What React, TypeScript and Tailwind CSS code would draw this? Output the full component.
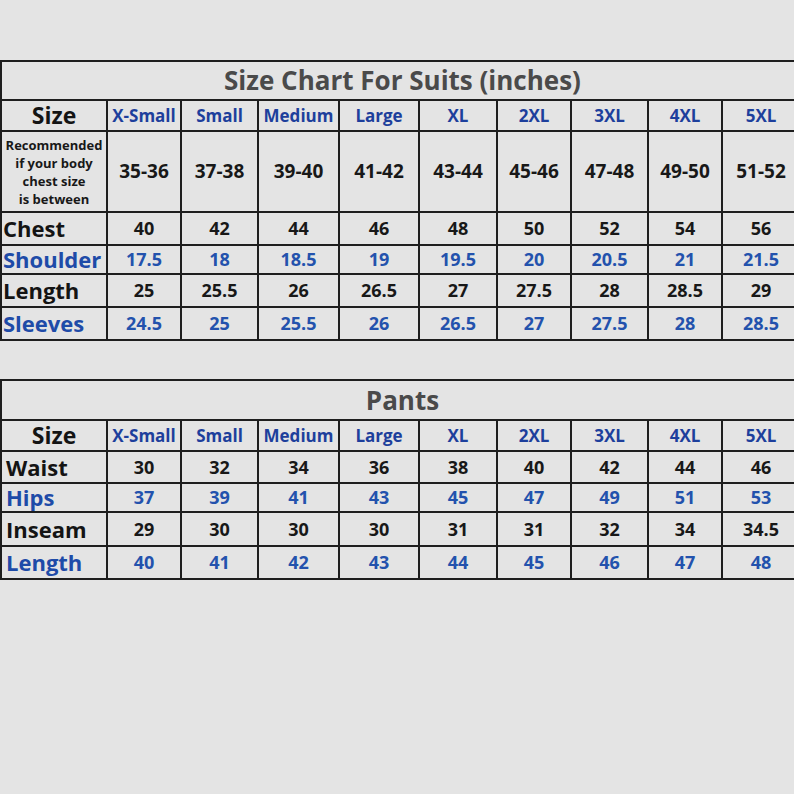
const cols = "grid-cols-[104px_72px_75px_79px_78px_76px_72px_75px_72px_76px]";
const sizes = ["X-Small", "Small", "Medium", "Large", "XL", "2XL", "3XL", "4XL", "5XL"];

type Row = { label: string; values: string[]; blue?: boolean; h: string };

const suitRows: Row[] = [
  { label: "Chest", values: ["40", "42", "44", "46", "48", "50", "52", "54", "56"], h: "h-[31px]" },
  { label: "Shoulder", values: ["17.5", "18", "18.5", "19", "19.5", "20", "20.5", "21", "21.5"], blue: true, h: "h-[27px]" },
  { label: "Length", values: ["25", "25.5", "26", "26.5", "27", "27.5", "28", "28.5", "29"], h: "h-[31px]" },
  { label: "Sleeves", values: ["24.5", "25", "25.5", "26", "26.5", "27", "27.5", "28", "28.5"], blue: true, h: "h-[31px]" },
];

const pantRows: Row[] = [
  { label: "Waist", values: ["30", "32", "34", "36", "38", "40", "42", "44", "46"], h: "h-[30px]" },
  { label: "Hips", values: ["37", "39", "41", "43", "45", "47", "49", "51", "53"], blue: true, h: "h-[27px]" },
  { label: "Inseam", values: ["29", "30", "30", "30", "31", "31", "32", "34", "34.5"], h: "h-[32px]" },
  { label: "Length", values: ["40", "41", "42", "43", "44", "45", "46", "47", "48"], blue: true, h: "h-[31px]" },
];

const ranges = ["35-36", "37-38", "39-40", "41-42", "43-44", "45-46", "47-48", "49-50", "51-52"];

function Cell({ children, className = "" }: { children?: React.ReactNode; className?: string }) {
  return <div className={`flex items-center justify-center bg-[#e4e4e4] ${className}`}>{children}</div>;
}

function HeaderRow() {
  return (
    <>
      <Cell className="h-[29px] text-[23px] text-[#141414]">Size</Cell>
      {sizes.map((s) => (
        <Cell key={s} className="text-[17px] text-[#1d3f9c]">
          {s}
        </Cell>
      ))}
    </>
  );
}

function DataRows({ rows, pad }: { rows: Row[]; pad: string }) {
  return (
    <>
      {rows.map((r, i) => (
        <div key={i} className="contents">
          <Cell className={`${r.h} justify-start ${pad} text-[22px] ${r.blue ? "text-[#1e4ba8]" : "text-[#141414]"}`}>
            {r.label}
          </Cell>
          {r.values.map((v, j) => (
            <Cell key={j} className={`text-[18px] ${r.blue ? "text-[#2352ad]" : "text-[#181818]"}`}>
              {v}
            </Cell>
          ))}
        </div>
      ))}
    </>
  );
}

export default function App() {
  return (
    <div
      className="h-[794px] w-[794px] overflow-hidden bg-[#e4e4e4] pt-[60px] font-bold"
      style={{ fontFamily: '"Open Sans", "Liberation Sans", sans-serif' }}
    >
      <div className={`grid w-[800px] ${cols} gap-[2px] bg-[#1e1e1e] p-[2px]`}>
        <Cell className="col-span-10 h-[37px] pl-[4px] text-[26px] text-[#4a4a4a]">Size Chart For Suits (inches)</Cell>
        <HeaderRow />
        <Cell className="h-[79px] flex-col text-[13px] leading-[18px] text-[#181818]">
          <span>Recommended</span>
          <span>if your body</span>
          <span>chest size</span>
          <span>is between</span>
        </Cell>
        {ranges.map((r) => (
          <Cell key={r} className="text-[19px] text-[#181818]">
            {r}
          </Cell>
        ))}
        <DataRows rows={suitRows} pad="pl-[1px]" />
      </div>

      <div className={`mt-[38px] grid w-[800px] ${cols} gap-[2px] bg-[#1e1e1e] p-[2px]`}>
        <Cell className="col-span-10 h-[38px] pl-[4px] text-[26px] text-[#4a4a4a]">Pants</Cell>
        <HeaderRow />
        <DataRows rows={pantRows} pad="pl-[4px]" />
      </div>
    </div>
  );
}
